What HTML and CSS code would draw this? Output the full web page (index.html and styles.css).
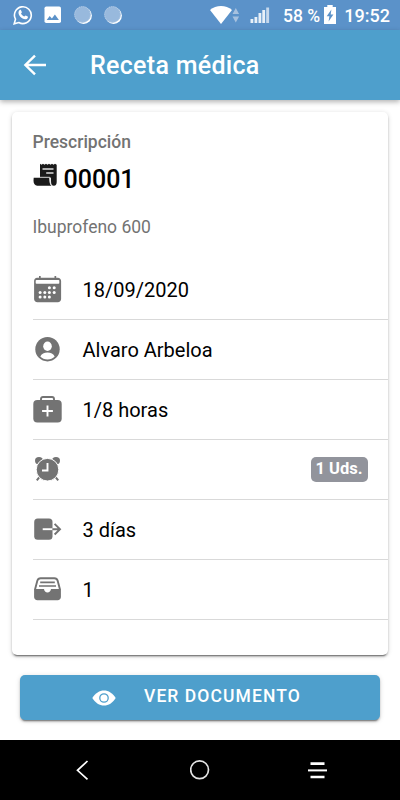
FILE: index.html
```html
<!DOCTYPE html>
<html lang="es">
<head>
    <meta charset="UTF-8">
    <meta name="viewport" content="width=device-width, initial-scale=1.0">
    <title>Receta médica</title>
    <link rel="stylesheet" href="styles.css">
</head>
<body>
    <div class="status-bar">
        <svg class="whatsapp" width="20" height="20" viewBox="0 0 20 20">
            <path d="M1.2 18.8l1.3-4.6a8.4 8.4 0 1 1 3.3 3.3z" fill="none" stroke="#fff" stroke-width="1.6"/>
            <path d="M6.7 5.1c.5-.5 1.1-.3 1.3.1l.8 1.8c.2.6-.7 1.3-.8 1.6.7 1.5 1.8 2.4 3.3 3 .4-.1 1-1.1 1.4-1l2 1c.6.4 0 2-.9 2.4-3.7 1.6-9.2-3.7-8.2-7.2.2-.7.6-1.2 1.1-1.7z" fill="#fff"/>
        </svg>
        <svg class="photo" width="18" height="18" viewBox="0 0 18 18">
            <rect x=".5" y=".5" width="16.5" height="16.5" rx="1.8" fill="#fff"/>
            <path d="M2.7 14l3-4.1 2.2 2.6 3-3.9 4 5.4z" fill="#5b92c9"/>
        </svg>
        <svg class="dot" width="20" height="20" viewBox="0 0 20 20">
            <circle cx="10.6" cy="10.6" r="8.3" fill="#fff"/>
            <circle cx="9.5" cy="9.5" r="8.3" fill="#98b9dd"/>
            <circle cx="9.5" cy="9.5" r="7.8" fill="none" stroke="#b9d0e9" stroke-dasharray="1 1.2"/>
        </svg>
        <svg class="dot" width="20" height="20" viewBox="0 0 20 20">
            <circle cx="10.6" cy="10.6" r="8.3" fill="#fff"/>
            <circle cx="9.5" cy="9.5" r="8.3" fill="#98b9dd"/>
            <circle cx="9.5" cy="9.5" r="7.8" fill="none" stroke="#b9d0e9" stroke-dasharray="1 1.2"/>
        </svg>
        <svg class="wifi" width="30" height="20" viewBox="0 0 30 20">
            <path d="M0 5C6-.2 16-.2 22 5L11 19z" fill="#fff"/>
            <path d="M22.5 9l3.3-6 3.3 6zM22.5 11.5l3.3 6 3.3-6z" fill="#a6c1df"/>
        </svg>
        <svg class="signal" width="20" height="18" viewBox="0 0 20 18">
            <path d="M.5 13h2.8v4H.5zM4.5 11h2.8v6H4.5zM8.5 7h2.8v10H8.5zM12.3 4h2.8v13h-2.8z" fill="#e8f0f8"/>
            <path d="M16.2 1.5h2.9V17h-2.9z" fill="#c6d8ec"/>
        </svg>
        <span class="battery-text">58 %</span>
        <svg class="battery" width="12" height="20" viewBox="0 0 12 20">
            <path d="M3.3 0h5.4v2H12v17H0V2h3.3z" fill="#fff"/>
            <path d="M7.4 4.6L2.7 11.2h2.7l-.8 5.2 4.8-7H6.7z" fill="#5b92c9"/>
        </svg>
        <span class="clock">19:52</span>
    </div>

    <header class="toolbar">
        <svg class="back" width="24" height="24" viewBox="0 0 24 24">
            <path d="M23 12H3M12 2.6L2.4 12l9.6 9.4" fill="none" stroke="#fff" stroke-width="2.4"/>
        </svg>
        <h1 class="title">Receta médica</h1>
    </header>

    <main class="content">
        <div class="card">
            <div class="card-header">
                <div class="subtitle">Prescripción</div>
                <div class="card-title">
                    <svg width="25" height="24" viewBox="0 0 25 24">
                        <path d="M7 .8l1.5 1 1.5-1 1.5 1 1.5-1 1.5 1 1.5-1 1.5 1 1.5-1 1.5 1 1.5-1 1.7 1V19c0 2.2-.9 3.7-2.8 3.7-1.9 0-2.7-1.2-2.8-3.3l-.2-4.7H7z" fill="#1a1a1a"/>
                        <path d="M9.5 6h11M13.2 10h7.3" stroke="#ddd" stroke-width="1.4"/>
                        <path d="M.7 14.8h15.6c.3 3.2.1 5.7 2 7.9H4.2C2 22.7.5 20.8.5 17.8z" fill="#1a1a1a"/>
                        <path d="M7 14.3h9.9l.3 4.9c.1 1.9.7 3 1.6 3.5" fill="none" stroke="#ddd" stroke-width=".9"/>
                    </svg>
                    <span>00001</span>
                </div>
            </div>
            <p class="medicine">Ibuprofeno 600</p>

            <div class="item">
                <svg class="item-icon" viewBox="0 0 30 30">
                    <path d="M4.2 2.7H6V1h1.7v1.7h13.8V1h1.7v1.7h1.6c1.9 0 3.3 1.3 3.3 3.2v18c0 1.9-1.4 3.3-3.3 3.3H4.4c-1.9 0-3.3-1.4-3.3-3.3v-18c0-1.9 1.2-3.2 3.1-3.2z"/>
                    <rect class="cut" x="2.7" y="5" width="23.6" height="3.8" rx=".8"/>
                    <g class="cut">
                        <circle cx="16.4" cy="12.8" r="1.5"/><circle cx="21.2" cy="12.8" r="1.5"/>
                        <circle cx="7.1" cy="17.4" r="1.5"/><circle cx="11.8" cy="17.4" r="1.5"/><circle cx="16.4" cy="17.4" r="1.5"/><circle cx="21.2" cy="17.4" r="1.5"/>
                        <circle cx="7.1" cy="22.1" r="1.5"/><circle cx="11.8" cy="22.1" r="1.5"/><circle cx="16.4" cy="22.1" r="1.5"/>
                    </g>
                </svg>
                <span class="label">18/09/2020</span>
            </div>
            <div class="item">
                <svg class="item-icon" viewBox="0 0 30 30">
                    <circle cx="14.5" cy="14.2" r="12.2"/>
                    <ellipse class="cut" cx="14.5" cy="11.3" rx="4.3" ry="4.7"/>
                    <path class="cut" d="M7.3 21.6c1.1-2.7 4-4 7.2-4s6.1 1.3 7.2 4c-1.8 2-4.3 3-7.2 3s-5.4-1-7.2-3z"/>
                </svg>
                <span class="label">Alvaro Arbeloa</span>
            </div>
            <div class="item">
                <svg class="item-icon" viewBox="0 0 30 30">
                    <rect x=".3" y="5" width="28.4" height="22.4" rx="4"/>
                    <path class="line" d="M8 5.5V4c0-1.3.8-2 2-2h9c1.2 0 2 .7 2 2v1.5" stroke-width="1.9"/>
                    <path class="cut-line" d="M14.5 10.6v10.8M9.1 16h10.8" stroke-width="1.9"/>
                </svg>
                <span class="label">1/8 horas</span>
            </div>
            <div class="item">
                <svg class="item-icon" viewBox="0 0 30 30">
                    <ellipse cx="6" cy="5.8" rx="4" ry="3.7"/>
                    <ellipse cx="23" cy="5.8" rx="4" ry="3.7"/>
                    <path class="line" d="M3.8 25.4l3.2-4M25.2 25.4l-3.2-4" stroke-width="2"/>
                    <circle class="ring" cx="14.5" cy="14.7" r="11.3"/>
                    <path class="cut-line" d="M14.5 8v7.5H9" stroke-width="1.9"/>
                </svg>
                <span class="badge">1 Uds.</span>
            </div>
            <div class="item">
                <svg class="item-icon" viewBox="0 0 30 30">
                    <rect x="1.2" y="3.6" width="18.3" height="21.2" rx="3.5"/>
                    <path class="cut-line" d="M9.7 14.2h9.8" stroke-width="1.9"/>
                    <path class="line" d="M19.5 14.2h7.4M21.6 8.9l5.4 5.3-5.4 5.3" stroke-width="1.9"/>
                </svg>
                <span class="label">3 días</span>
            </div>
            <div class="item">
                <svg class="item-icon" viewBox="0 0 30 30">
                    <path class="line" d="M2 14.5L4.4 5.6c.5-1.7 1.6-2.4 3.2-2.4h13.8c1.6 0 2.7.7 3.2 2.4L27 14.5" stroke-width="1.9"/>
                    <path d="M1.1 13.9H11c.3 2.1 1.6 3.5 3.5 3.5s3.2-1.4 3.5-3.5h9.9V22c0 1.9-1.4 3.3-3.3 3.3H4.4c-1.9 0-3.3-1.4-3.3-3.3z"/>
                    <path class="line" d="M7.2 7.3h14.6M6 11h17" stroke-width="1.7"/>
                </svg>
                <span class="label">1</span>
            </div>
        </div>

        <button class="btn">
            <svg width="24" height="16" viewBox="0 0 24 16">
                <path d="M.3 8C3.4 3 7.5.4 12 .4S20.6 3 23.7 8C20.6 13 16.5 15.6 12 15.6S3.4 13 .3 8z" fill="#fff"/>
                <circle cx="12" cy="8" r="4.2" fill="none" stroke="#4e9fcc" stroke-width="1.3"/>
            </svg>
            <span>Ver documento</span>
        </button>
    </main>

    <nav class="nav-bar">
        <svg width="20" height="20" viewBox="0 0 20 20">
            <path d="M15.5 1L5.5 10.3l10 9" fill="none" stroke="#fff" stroke-width="1.7"/>
        </svg>
        <svg width="20" height="20" viewBox="0 0 20 20">
            <circle cx="9.6" cy="9.8" r="8.9" fill="none" stroke="#e4e4e4" stroke-width="1.7"/>
        </svg>
        <svg width="20" height="20" viewBox="0 0 20 20">
            <path d="M3.5 3.6h14M3.5 17h14" stroke="#fff" stroke-width="2.6"/>
            <path d="M1 10.4h19" stroke="#fff" stroke-width="2"/>
        </svg>
    </nav>
</body>
</html>
```

FILE: styles.css
```css
* {
    box-sizing: border-box;
}

body {
    margin: 0;
    height: 800px;
    display: flex;
    flex-direction: column;
    font-family: Roboto, sans-serif;
    background-color: #fff;
    color: #000;
}

svg {
    display: block;
    flex: none;
}

/* Status bar */
.status-bar {
    display: flex;
    align-items: center;
    height: 30px;
    padding: 0 10px 0 13px;
    background-color: #5b92c9;
    color: #fff;
    font-size: 18px;
    font-weight: 500;
    white-space: nowrap;
}

.photo {
    margin: 0 11px;
}

.dot {
    margin-right: 10px;
}

.wifi {
    margin-left: 77px;
}

.signal {
    margin-left: 10px;
}

.battery-text {
    width: 41px;
    margin-left: 13px;
    font-size: 17.5px;
    line-height: 20px;
    padding-top: 2px;
}

.clock {
    margin-left: auto;
    line-height: 20px;
    padding-top: 2px;
}

/* Toolbar */
.toolbar {
    display: flex;
    align-items: center;
    height: 70px;
    padding-left: 23px;
    background-color: #4e9fcc;
    color: #fff;
    box-shadow: 0 2px 5px rgba(0, 0, 0, 0.3);
}

.title {
    margin: 0 0 0 43px;
    font-size: 25px;
    font-weight: 500;
    letter-spacing: 0.3px;
}

/* Card */
.content {
    flex: 1;
    padding: 12px 12px 0;
}

.card {
    height: 543px;
    padding: 20px 0 0 20.5px;
    border-radius: 5px;
    box-shadow: 0 3px 1px -2px rgba(0, 0, 0, 0.35), 0 2px 2px rgba(0, 0, 0, 0.2), 0 1px 5px rgba(0, 0, 0, 0.16);
}

.card-header {
    height: 85px;
}

.subtitle {
    font-size: 17.5px;
    font-weight: 500;
    line-height: 20px;
    color: #737373;
}

.card-title {
    display: flex;
    gap: 6px;
    margin-top: 12px;
    font-size: 25px;
    font-weight: 500;
    line-height: 32px;
}

.card-title svg {
    margin-top: -1px;
}

.medicine {
    margin: 0;
    height: 43px;
    font-size: 17.5px;
    line-height: 21px;
    color: #737373;
}

.item {
    display: flex;
    align-items: center;
    height: 60px;
    border-bottom: 1px solid #d9d9d9;
}

.item-icon {
    width: 30px;
    height: 30px;
    fill: #737373;
}

.item-icon .cut {
    fill: #fff;
}

.item-icon .line {
    fill: none;
    stroke: #737373;
}

.item-icon .cut-line {
    fill: none;
    stroke: #fff;
}

.item-icon .ring {
    stroke: #fff;
    stroke-width: 1;
}

.label {
    margin-left: 20px;
    font-size: 20px;
}

.badge {
    margin: 0 20.5px 0 auto;
    width: 57px;
    height: 25px;
    border-radius: 5px;
    background-color: #92949c;
    color: #fff;
    font-size: 16.5px;
    font-weight: 700;
    line-height: 24px;
    text-align: center;
}

/* Button */
.btn {
    display: flex;
    align-items: center;
    width: 360px;
    height: 45px;
    margin: 20px 8px 0;
    padding: 0 0 0 72px;
    border: none;
    border-radius: 5px;
    background-color: #4e9fcc;
    box-shadow: 0 3px 1px -2px rgba(0, 0, 0, 0.3), 0 2px 2px rgba(0, 0, 0, 0.2), 0 1px 5px rgba(0, 0, 0, 0.15);
    color: #fff;
    font-family: inherit;
    font-size: 17.5px;
    font-weight: 500;
    letter-spacing: 1.08px;
    text-transform: uppercase;
    cursor: pointer;
}

.btn span {
    margin-left: 28px;
    padding-bottom: 3px;
}

/* Bottom navigation */
.nav-bar {
    display: flex;
    justify-content: space-between;
    align-items: center;
    height: 60px;
    padding: 0 73px 0 72px;
    background-color: #000;
}
```
